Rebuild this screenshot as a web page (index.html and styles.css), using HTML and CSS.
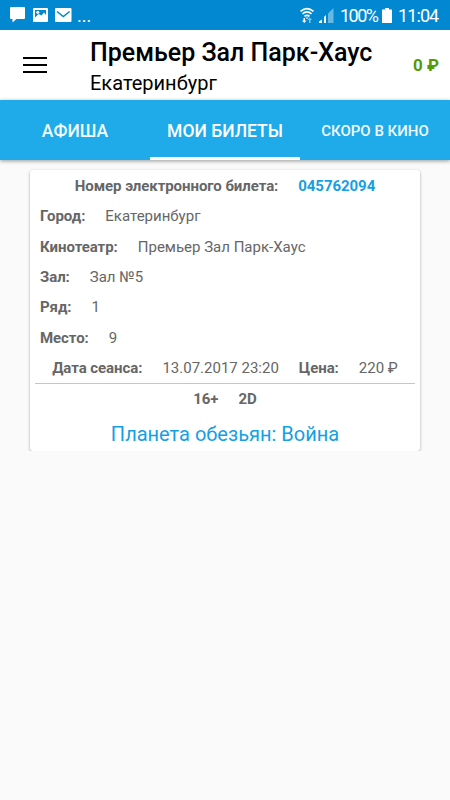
FILE: index.html
```html
<!DOCTYPE html>
<html lang="ru">
<head>
  <meta charset="UTF-8" />
  <meta name="viewport" content="width=device-width, initial-scale=1.0"/>
  <title>Мои билеты</title>
  <link rel="stylesheet" href="styles.css">
</head>
<body>

  <div class="status-bar">
    <svg class="icon-chat" width="16" height="16" viewBox="0 0 16 16"><path fill="#fff" d="M1 0h13q1 0 1 1v10q0 1-1 1H6.500L2.500 15.500V12H1q-1 0-1-1V1q0-1 1-1z"/></svg>
    <svg class="icon-image" width="16" height="15" viewBox="0 0 16 15">
      <rect x="0" y="0" width="15" height="14" rx="1" fill="#fff"/>
      <path fill="#0288d1" d="M2 2h11v5l-2-2.500-2.500 3-3-1.500L2 9.500z"/>
      <circle cx="4.800" cy="4.300" r="1.500" fill="#fff"/>
    </svg>
    <svg class="icon-mail" width="17" height="15" viewBox="0 0 17 15">
      <rect x="0" y="0" width="16.500" height="14" rx="1" fill="#fff"/>
      <path d="M2 3.500l6.300 5 6.300-5" fill="none" stroke="#0288d1" stroke-width="1.500"/>
    </svg>
    <span class="dots">...</span>
    <svg class="icon-wifi" width="14" height="17" viewBox="0 0 14 17">
      <g fill="none" stroke="#fff" stroke-width="1.600">
        <path d="M.500 4.300q6.500-5.500 13 0"/>
        <path d="M2.500 6.900q4.500-4 9 0"/>
        <path d="M4.500 9.400q2.500-2.200 5 0"/>
      </g>
      <path fill="#fff" d="M5.500 10.500h3L7 12zM3.500 11h1.500v2.500h1.500L4.200 16 2 13.500h1.500z"/>
      <path fill="#8ac6e8" d="M9 16v-3H7.500L9.800 10.500 12 13h-1.500v3z"/>
    </svg>
    <svg class="icon-signal" width="15" height="15" viewBox="0 0 15 15">
      <path fill="#fff" d="M0 15v-1.500l3-2V15zM5 15V9l2-2v8z"/>
      <path fill="#67b8e3" d="M9 15V5.500L14.500 0v15z"/>
    </svg>
    <span class="battery-text">100%</span>
    <svg class="icon-battery" width="10" height="15" viewBox="0 0 10 15"><path fill="#fff" d="M3 0h4v1.500h3V15H0V1.500h3z"/></svg>
    <span class="clock">11:04</span>
  </div>

  <header>
    <button class="menu-btn" aria-label="Меню"><span></span><span></span><span></span></button>
    <div class="cinema">
      <h1>Премьер Зал Парк-Хаус</h1>
      <p>Екатеринбург</p>
    </div>
    <div class="balance">0 ₽</div>
  </header>

  <nav class="tabs">
    <a class="tab">АФИША</a>
    <a class="tab active">МОИ БИЛЕТЫ</a>
    <a class="tab tab-small">СКОРО В КИНО</a>
  </nav>

  <div class="ticket">
    <div class="row center"><b>Номер электронного билета:</b><b class="number">045762094</b></div>
    <div class="row"><b>Город:</b><span>Екатеринбург</span></div>
    <div class="row"><b>Кинотеатр:</b><span>Премьер Зал Парк-Хаус</span></div>
    <div class="row"><b>Зал:</b><span>Зал №5</span></div>
    <div class="row"><b>Ряд:</b><span>1</span></div>
    <div class="row"><b>Место:</b><span>9</span></div>
    <div class="row center"><b>Дата сеанса:</b><span>13.07.2017 23:20</span><b>Цена:</b><span>220 ₽</span></div>
    <div class="divider"></div>
    <div class="row center"><b>16+</b><b>2D</b></div>
    <div class="film">Планета обезьян: Война</div>
  </div>

</body>
</html>
```
FILE: styles.css
```css
body {
  font-family: Roboto, sans-serif;
  margin: 0;
  background: #fafafa;
  color: #000;
}
.status-bar {
  height: 30px;
  box-sizing: border-box;
  background: #0288d1;
  color: white;
  display: flex;
  align-items: center;
  padding: 0 11px 0 10px;
  font-size: 18px;
}
.status-bar svg {
  flex: none;
}
.icon-image {
  margin-left: 7px;
}
.icon-mail {
  margin-left: 6px;
}
.dots {
  margin-left: 5px;
}
.icon-wifi {
  margin-left: auto;
}
.icon-signal {
  margin-left: 5px;
}
.battery-text {
  margin-left: 6px;
  width: 39px;
  white-space: nowrap;
  letter-spacing: -1.5px;
}
.icon-battery {
  margin-left: 3px;
}
.clock {
  margin-left: 6px;
  width: 41px;
  white-space: nowrap;
  letter-spacing: -0.9px;
}
header {
  height: 70px;
  box-sizing: border-box;
  background: white;
  display: flex;
  align-items: center;
  padding: 0 11px 0 23px;
}
.menu-btn {
  background: none;
  border: none;
  padding: 0 0 1px;
  width: 24px;
  display: flex;
  flex-direction: column;
  gap: 5px;
}
.menu-btn span {
  height: 2px;
  background: black;
}
.cinema {
  margin-left: 43px;
  padding-top: 4px;
  flex: 1;
  white-space: nowrap;
}
.cinema h1 {
  margin: 0;
  font-size: 25px;
  line-height: 32px;
  font-weight: 500;
}
.cinema p {
  margin: 0;
  font-size: 20px;
  line-height: 28px;
}
.balance {
  color: #559a09;
  font-size: 17px;
  font-weight: 700;
}
.tabs {
  position: relative;
  height: 60px;
  background: #1faaea;
  display: grid;
  grid-template-columns: repeat(3, 1fr);
  box-shadow: 0 1px 4px rgba(0,0,0,0.4);
}
.tab {
  display: flex;
  align-items: center;
  justify-content: center;
  box-sizing: border-box;
  padding-top: 4px;
  border-bottom: 3px solid transparent;
  color: #f2faff;
  font-size: 17.5px;
  font-weight: 500;
  white-space: nowrap;
}
.tab.active {
  color: white;
  border-bottom-color: white;
}
.tab-small {
  font-size: 15px;
}
.ticket {
  margin: 10px 30px 0;
  height: 281px;
  box-sizing: border-box;
  padding: 1px 5px 0;
  background: white;
  border-radius: 3px;
  box-shadow: 0 1px 3px rgba(0,0,0,0.35);
  color: #666;
  font-size: 15px;
}
.row {
  display: flex;
  gap: 20px;
  height: 30.35px;
  line-height: 31.5px;
  padding: 0 5px;
  white-space: nowrap;
}
.row b {
  font-weight: 700;
  letter-spacing: -0.06px;
}
.row .number {
  color: #159fe4;
}
.center {
  justify-content: center;
}
.divider {
  height: 1px;
  background: #e6b9b9;
}
.film {
  color: #159fe4;
  font-size: 20px;
  line-height: 38px;
  text-align: center;
}
```
